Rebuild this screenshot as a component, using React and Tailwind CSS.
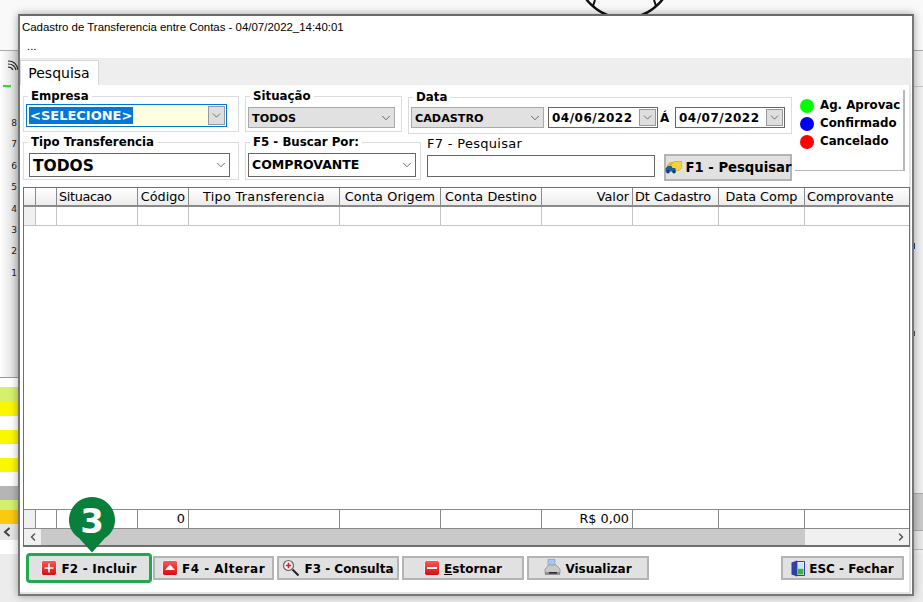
import { ChevronDown, ChevronLeft, ChevronRight } from "lucide-react";

const COLS = "grid grid-cols-[12px_21px_81px_51px_151px_101px_101px_91px_86px_86px_1fr]";
const HEADERS = [
  ["", ""],
  ["", ""],
  ["Situacao", "pl-[2px] text-left tracking-[-0.35px]"],
  ["Código", "text-center"],
  ["Tipo Transferencia", "text-center tracking-[0.3px]"],
  ["Conta Origem", "text-center tracking-[0.1px]"],
  ["Conta Destino", "text-center tracking-[0.1px]"],
  ["Valor", "pr-[3px] text-right"],
  ["Dt Cadastro", "pl-[2px] text-left"],
  ["Data Comp", "text-center"],
  ["Comprovante", "pl-[2px] text-left"],
];
const FOOTER = ["", "", "", "0", "", "", "", "R$ 0,00", "", "", ""];
const STRIPES = [
  ["h-[9px]", "bg-white"],
  ["h-[15px]", "bg-[#d4f06c]"],
  ["h-[14px]", "bg-[#fbf700]"],
  ["h-[14px]", "bg-white"],
  ["h-[14px]", "bg-[#fbf700]"],
  ["h-[14px]", "bg-white"],
  ["h-[14px]", "bg-[#fbf700]"],
  ["h-[14px]", "bg-white"],
  ["h-[14px]", "bg-[#b5b5b5]"],
  ["h-[10px]", "bg-[#d4f06c]"],
  ["h-[14px]", "bg-[#fbc90e]"],
];

function Field({ label, className, children }) {
  return (
    <fieldset className={`border border-[#dcdcdc] pl-[2px] ${className}`}>
      <legend className="ml-[2px] px-[3px] text-[11.8px] leading-[14px] font-bold">{label}</legend>
      {children}
    </fieldset>
  );
}

function Combo({ text, className, textClass = "text-[11.2px] pt-[3px]", boxed }) {
  return (
    <div className={`flex items-center justify-between border ${className}`}>
      <span className={`pl-[3px] font-bold ${textClass}`}>{text}</span>
      {boxed ? (
        <span className="mr-[1px] flex h-[17px] w-[17px] items-center justify-center border border-[#999] bg-[#dedede]">
          <ChevronDown size={13} strokeWidth={1.2} className="text-[#333]" />
        </span>
      ) : (
        <ChevronDown size={14} strokeWidth={1.2} className="mr-[1px] text-[#333]" />
      )}
    </div>
  );
}

function Square({ id, children }) {
  return (
    <svg width="16" height="16" viewBox="0 0 16 16" className="shrink-0">
      <defs>
        <linearGradient id={id} x1="0" y1="0" x2="0" y2="1">
          <stop offset="0" stopColor="#ff5a5a" />
          <stop offset="1" stopColor="#d40b0b" />
        </linearGradient>
      </defs>
      <rect x="0.5" y="0.5" width="15" height="15" rx="2" fill={`url(#${id})`} stroke="#eee" />
      {children}
    </svg>
  );
}

const IconPlus = () => (
  <Square id="gPlus">
    <path d="M8 3.5v9M3.5 8h9" stroke="#fff" strokeWidth="1.6" />
  </Square>
);
const IconUp = () => (
  <Square id="gUp">
    <path d="M8 4.5l5 5.5H3z" fill="#fff" />
  </Square>
);
const IconMinus = () => (
  <Square id="gMinus">
    <path d="M3 8h10" stroke="#fff" strokeWidth="2" />
  </Square>
);
const IconLens = () => (
  <svg width="18" height="18" viewBox="0 0 18 18" className="shrink-0">
    <path d="M10.5 10.5l6 6" stroke="#222" strokeWidth="2" />
    <circle cx="6.5" cy="6.5" r="5" fill="#f4f4f4" stroke="#666" strokeWidth="1.2" />
    <path d="M6.5 3.8v5.4M3.8 6.5h5.4" stroke="#e0182d" strokeWidth="1.6" />
  </svg>
);
const IconPrinter = () => (
  <svg width="17" height="18" viewBox="0 0 17 18" className="shrink-0">
    <path d="M4 0.5h7v7H4z" fill="#a9c6ee" stroke="#6f93c9" strokeWidth="0.6" />
    <path d="M1 10l4-4h7l4 4v4.5H1z" fill="#c9c9c9" stroke="#8a8a8a" strokeWidth="0.7" />
    <path d="M1 13h15v3H1z" fill="#8f8f8f" />
    <path d="M5 13h8v1.6H5z" fill="#2b2b2b" />
  </svg>
);
const IconDoor = () => (
  <svg width="14" height="17" viewBox="0 0 14 17" className="shrink-0">
    <path d="M0.5 2.5L6 0.5v16l-5.5-2z" fill="#2f3fa8" />
    <path d="M6 1.5h7.5v14H6z" fill="#fff" stroke="#2f3fa8" />
    <path d="M7 8.5h5.5v6H7z" fill="#35b53a" />
    <path d="M7 2.5h5.5v6H7z" fill="#cfe3f7" />
  </svg>
);
const IconCars = () => (
  <svg width="17" height="13" viewBox="0 0 17 13" className="shrink-0">
    <path d="M2 4l3-3h4l-3 3v4H2z" fill="#e8b81e" />
    <path d="M6 4l3-3.5h8v6l-3 3H6z" fill="#f6d232" stroke="#b58f12" strokeWidth="0.5" />
    <path d="M0.5 7.5l2-2.5h4l1 2h3v3.5H0.5z" fill="#1f5f9e" />
    <circle cx="3" cy="10.7" r="1.8" fill="#123a66" />
    <circle cx="9" cy="10.7" r="1.8" fill="#123a66" />
  </svg>
);

function Btn({ icon, className = "", children }) {
  return (
    <div className={`flex h-[24px] items-center justify-center gap-[4px] border-2 border-[#b4b4b4] bg-[#e1e1e1] text-[12px] font-bold whitespace-nowrap ${className}`}>
      {icon}
      <span className="pt-[1px]">{children}</span>
    </div>
  );
}

function Dot({ color, label }) {
  return (
    <div className="flex h-[18px] items-center gap-[6px] text-[11.8px] font-bold whitespace-nowrap">
      <span className={`h-[14px] w-[14px] shrink-0 rounded-full ${color}`} />
      <span>{label}</span>
    </div>
  );
}

export default function App() {
  return (
    <div className="relative h-[602px] w-[923px] overflow-hidden bg-[#ececec] font-['DejaVu_Sans',sans-serif] text-[#000]">
      {/* janela de tras */}
      <div className="flex h-[51px] border-b border-[#aaa] bg-[#f9f9f9]" />
      <svg width="90" height="16" viewBox="0 0 90 16" className="absolute top-0 left-[580px]">
        <circle cx="44.5" cy="-29.6" r="47.8" fill="none" stroke="#111" strokeWidth="2.5" />
        <path d="M15 0l-2 6M74 0l2 6" stroke="#111" strokeWidth="2" />
      </svg>
      <div className="flex justify-between">
        <div className="flex w-[18px] flex-col">
          <div className="relative h-[326px] bg-gradient-to-r from-white to-[#d8d8d8]">
            <svg width="12" height="12" viewBox="0 0 12 12" className="absolute top-[9px] left-[7px]">
              <path d="M1 1c5 0 9 3 10 9M1 4c4 0 7 2 8 6M1 7c2 0 4 1 5 3" fill="none" stroke="#222" strokeWidth="1.1" />
            </svg>
            <div className="absolute top-[34px] left-[3px] h-[2px] w-[8px] bg-[#22e622]" />
            <div className="flex flex-col items-end pt-[62px] pr-[1px] text-[9px] leading-[21.4px] text-[#222]">
              {[8, 7, 6, 5, 4, 3, 2, 1].map((n) => (
                <span key={n}>{n}</span>
              ))}
            </div>
          </div>
          <div className="h-[1px] bg-[#999]" />
          {STRIPES.map(([h, c], i) => (
            <div key={i} className={`${h} ${c}`} />
          ))}
          <div className="flex h-[16px] shrink-0 items-center bg-[#e6e6e6] pl-[3px]">
            <svg width="8" height="10" viewBox="0 0 8 10" className="shrink-0">
              <path d="M6.5 1L2 5l4.5 4" fill="none" stroke="#444" strokeWidth="2" />
            </svg>
          </div>
          <div className="h-[14px] bg-white" />
        </div>
        <div className="relative flex w-[10px] flex-col bg-[#efefef]">
          <div className="h-[36px] border-b border-[#c8c8c8]" />
          <div className="h-[406px]" />
          <div className="h-[38px] border-y border-[#aaa] bg-[#c9c9c9]" />
          <div className="h-[19px] border-b border-[#bbb] bg-[#e9e9e9]" />
          <div className="absolute top-[192px] left-0 h-[6px] w-[2px] bg-[#1c3f8f]" />
          <div className="absolute top-[280px] left-0 h-[5px] w-[2px] bg-[#555]" />
        </div>
      </div>

      {/* janela principal */}
      <div className="absolute top-[14px] left-[18px] flex h-[582px] w-[896px] flex-col border-2 border-[#777] border-t-[#6a6a6a] bg-white pr-[1px] shadow-[0_0_8px_rgba(0,0,0,0.35)]">
        <div className="h-[42px] pl-[2px] font-['Liberation_Sans',sans-serif] text-[11.45px]">
          <div className="pt-[4px] leading-[15px]">Cadastro de Transferencia entre Contas - 04/07/2022_14:40:01</div>
          <div className="pl-[5px] pt-[5px] leading-[12px]">...</div>
        </div>
        <div className="flex h-[27px] bg-[#eeeeee]">
          <div className="mt-[2px] flex w-[79px] items-center justify-center border-x border-t border-[#d8d8d8] bg-white pr-[1px] text-[14px]">Pesquisa</div>
        </div>
        <div className="flex min-h-0 flex-1 flex-col border-2 border-t-0 border-l-0 border-[#e4e4e4] pt-[4px] pl-[3px]">
          <div className="relative flex h-[98px] gap-[3px]">
            <div className="flex w-[769px] flex-col">
              <div className="flex h-[46px] gap-[6px]">
                <Field label="Empresa" className="h-[43px] w-[216px]">
                  <div className="mt-[1px] flex h-[23px] w-[201px] items-center justify-between border border-[#0078d7] bg-[#ffffe1] pl-[2px]">
                    <span className="bg-[#0078d7] px-[1px] text-[13px] leading-[17px] font-bold text-white">&lt;SELECIONE&gt;</span>
                    <span className="mr-[1px] flex h-[19px] w-[17px] items-center justify-center border border-[#999] bg-[#dedede]">
                      <ChevronDown size={13} strokeWidth={1.2} className="text-[#333]" />
                    </span>
                  </div>
                </Field>
                <Field label="Situação" className="h-[43px] w-[157px]">
                  <Combo text="TODOS" className="mt-[4px] h-[21px] w-[147px] border-[#aaa] bg-[#e1e1e1]" />
                </Field>
                <Field label="Data" className="mt-[1px] h-[44px] w-[384px]">
                  <div className="mt-[3px] flex items-center">
                    <Combo text="CADASTRO" className="h-[21px] w-[133px] border-[#aaa] bg-[#e1e1e1]" />
                    <Combo text="04/06/2022" boxed textClass="pl-[2px] text-[12px] tracking-[0.5px]" className="ml-[4px] h-[21px] w-[110px] border-[#666]" />
                    <span className="ml-[2px] w-[15px] text-[12px] font-bold">Á</span>
                    <Combo text="04/07/2022" boxed textClass="pl-[2px] text-[12px] tracking-[0.5px]" className="h-[21px] w-[110px] border-[#666]" />
                  </div>
                </Field>
              </div>
              <div className="flex gap-[6px]">
                <Field label="Tipo Transferencia" className="h-[45px] w-[216px]">
                  <Combo text="TODOS" textClass="pt-[3px] text-[15.5px]" className="mt-[4px] ml-[3px] h-[24px] w-[201px] border-[#666]" />
                </Field>
                <Field label="F5 - Buscar Por:" className="h-[45px] w-[176px]">
                  <Combo text="COMPROVANTE" textClass="pt-[1px] text-[12.5px]" className="mt-[4px] h-[24px] w-[168px] border-[#666]" />
                </Field>
                <div className="w-[228px]">
                  <div className="pt-[1px] text-[13px] leading-[16px] tracking-[0.3px]">F7 - Pesquisar</div>
                  <div className="mt-[3px] h-[22px] border border-[#666]" />
                </div>
                <Btn icon={<IconCars />} className="mt-[19px] ml-[3px] h-[27px] w-[128px] text-[13.2px]">F1 - Pesquisar</Btn>
              </div>
            </div>
            <div className="mt-[1px] flex h-[81px] w-[110px] flex-col border-r-2 border-b border-[#b8b8b8] pt-[7px] pl-[5px]">
              <Dot color="bg-[#00ff00]" label="Ag. Aprovac" />
              <Dot color="bg-[#0000f0]" label="Confirmado" />
              <Dot color="bg-[#ff0000]" label="Cancelado" />
            </div>
          </div>

          <div className="flex h-[360px] w-[887px] flex-col border border-b-2 border-[#6f6f6f]">
            <div className={`${COLS} h-[19px] border-b-2 border-[#8a8a8a] bg-gradient-to-b from-white to-[#ececec] text-[12.8px] leading-[17px]`}>
              {HEADERS.map(([t, c], i) => (
                <div key={i} className={`border-r border-[#8a8a8a] whitespace-nowrap last:border-r-0 ${c}`}>{t}</div>
              ))}
            </div>
            <div className={`${COLS} h-[19px] border-b border-[#c4c4c4]`}>
              {HEADERS.map((_, i) => (
                <div key={i} className={`border-r border-[#c4c4c4] last:border-r-0 ${i === 0 ? "bg-[#f0f0f0]" : ""}`} />
              ))}
            </div>
            <div className="flex-1" />
            <div className={`${COLS} h-[20px] border-y border-[#8a8a8a] text-[12.8px] leading-[18px]`}>
              {FOOTER.map((t, i) => (
                <div key={i} className={`border-r border-[#8a8a8a] pr-[3px] text-right last:border-r-0 ${i === 0 ? "bg-[#f0f0f0]" : ""}`}>{t}</div>
              ))}
            </div>
            <div className="flex h-[16px] items-center bg-[#f0f0f0]">
              <div className="flex w-[17px] justify-center">
                <ChevronLeft size={12} strokeWidth={3} className="text-[#555]" />
              </div>
              <div className="h-full w-[764px] bg-[#c9c9c9]" />
              <div className="flex flex-1 justify-end pr-[2px]">
                <ChevronRight size={12} strokeWidth={3} className="text-[#555]" />
              </div>
            </div>
          </div>

          <div className="flex flex-1 items-start gap-[3px] pt-[9px] pl-[6px]">
            <Btn icon={<IconPlus />} className="mr-[1px] w-[120px] rounded-[1px] border-none tracking-[0.2px] outline-3 outline-[#22a84f]">F2 - Incluir</Btn>
            <Btn icon={<IconUp />} className="w-[121px] tracking-[0.5px]">F4 - Alterar</Btn>
            <Btn icon={<IconLens />} className="w-[122px]">F3 - Consulta</Btn>
            <Btn icon={<IconMinus />} className="w-[122px]">
              <u>E</u>stornar
            </Btn>
            <Btn icon={<IconPrinter />} className="w-[122px]">Visualizar</Btn>
            <Btn icon={<IconDoor />} className="mr-[5px] ml-auto w-[123px]">ESC - Fechar</Btn>
          </div>
        </div>
      </div>

      {/* marcador verde */}
      <div className="absolute top-[497px] left-[69px] h-[56px] w-[46px]">
        <svg width="46" height="56" viewBox="0 0 46 56" className="absolute inset-0">
          <path d="M23 0C35.7 0 46 10.3 46 23C46 31 42 37 36 41L23 55.5L10 41C4 37 0 31 0 23C0 10.3 10.3 0 23 0Z" fill="#08803c" />
        </svg>
        <div className="absolute inset-x-0 top-[2px] text-center text-[34px] leading-[44px] font-bold text-white">3</div>
      </div>
    </div>
  );
}
